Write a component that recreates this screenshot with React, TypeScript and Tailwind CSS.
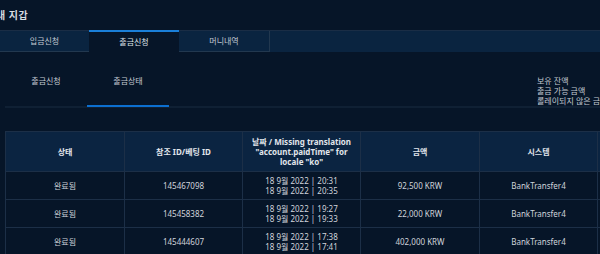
import React from "react";

const rows = [
  { status: "완료됨", id: "145467098", d1: "18 9월 2022 | 20:31", d2: "18 9월 2022 | 20:35", amt: "92,500 KRW", sys: "BankTransfer4" },
  { status: "완료됨", id: "145458382", d1: "18 9월 2022 | 19:27", d2: "18 9월 2022 | 19:33", amt: "22,000 KRW", sys: "BankTransfer4" },
  { status: "완료됨", id: "145444607", d1: "18 9월 2022 | 17:38", d2: "18 9월 2022 | 17:41", amt: "402,000 KRW", sys: "BankTransfer4" },
];

const cols = "grid grid-cols-[119px_118px_118px_119px_118px_118px]";

export default function App() {
  return (
    <div className="w-[600px] h-[254px] overflow-hidden bg-[#061528] text-[#c9ced6] font-['Noto_Sans','Noto_Sans_CJK_KR',sans-serif]">
      {/* title */}
      <div className="h-[30px] flex items-center">
        <span className="ml-[-4px] text-[10px] font-semibold text-[#d8dce2] tracking-[0.5px]">내 지갑</span>
      </div>
      {/* top tabs */}
      <div className="h-[22px] flex bg-[#0a2440] border-t border-[#1a2d45] w-[700px]">
        <div className="w-[89px] flex items-center justify-center text-[8px] text-[#c3c9d1] border-b border-[#22384f]">입금신청</div>
        <div className="w-[90px] flex items-center justify-center text-[8px] text-[#dfe3e8] bg-[#061528] border-t-2 border-[#1a7fd8] mt-[-1px]">출금신청</div>
        <div className="w-[91px] flex items-center justify-center text-[8px] text-[#c3c9d1] border-b border-r border-[#22384f]">머니내역</div>
      </div>
      {/* subtabs + summary */}
      <div className="flex h-[56px] w-[700px]">
        <div className="shrink-0 w-[530px] ml-[5px] border-b-2 border-[#0f2034] flex">
          <div className="w-[82px] flex items-center justify-center text-[8px] text-[#c3c9d1] pt-[4px]">출금신청</div>
          <div className="w-[82px] flex items-center justify-center text-[8px] text-[#c3c9d1] pt-[4px] border-b-2 border-[#0c6fd0] mb-[-1px]">출금상태</div>
        </div>
        <div className="shrink-0 border-b-2 border-[#0f2034] w-[150px] pl-[2px] pt-[24px] text-[8px] leading-[10px] text-[#c3c9d1] whitespace-nowrap">
          <div>보유 잔액</div>
          <div>출금 가능 금액</div>
          <div>롤레이되지 않은 금액</div>
        </div>
      </div>
      {/* table */}
      <div className="mt-[23px] ml-[5px] w-[720px] border-t border-l border-[#1c2f47]">
        <div className={`${cols} h-[40px] bg-[#0b2441] text-[8px] leading-[10px] font-bold text-[#e2e6ec]`}>
          <div className="flex items-center justify-center border-r border-b border-[#1c2f47]">상태</div>
          <div className="flex items-center justify-center border-r border-b border-[#1c2f47]">참조 ID/베팅 ID</div>
          <div className="flex items-center justify-center text-center border-r border-b border-[#1c2f47] px-[4px]">
            날짜 / Missing translation "account.paidTime" for locale "ko"
          </div>
          <div className="flex items-center justify-center border-r border-b border-[#1c2f47]">금액</div>
          <div className="flex items-center justify-center border-r border-b border-[#1c2f47]">시스템</div>
          <div className="border-r border-b border-[#1c2f47]"></div>
        </div>
        {rows.map((r) => (
          <div key={r.id} className={`${cols} h-[28px] text-[8px] leading-[10px] text-[#d0d4db]`}>
            <div className="flex items-center justify-center border-r border-b border-[#1c2f47]">{r.status}</div>
            <div className="flex items-center justify-center border-r border-b border-[#1c2f47]">{r.id}</div>
            <div className="flex flex-col items-center justify-center border-r border-b border-[#1c2f47]">
              <div>{r.d1}</div>
              <div>{r.d2}</div>
            </div>
            <div className="flex items-center justify-center border-r border-b border-[#1c2f47]">{r.amt}</div>
            <div className="flex items-center justify-center border-r border-b border-[#1c2f47]">{r.sys}</div>
            <div className="border-r border-b border-[#1c2f47]"></div>
          </div>
        ))}
      </div>
    </div>
  );
}
